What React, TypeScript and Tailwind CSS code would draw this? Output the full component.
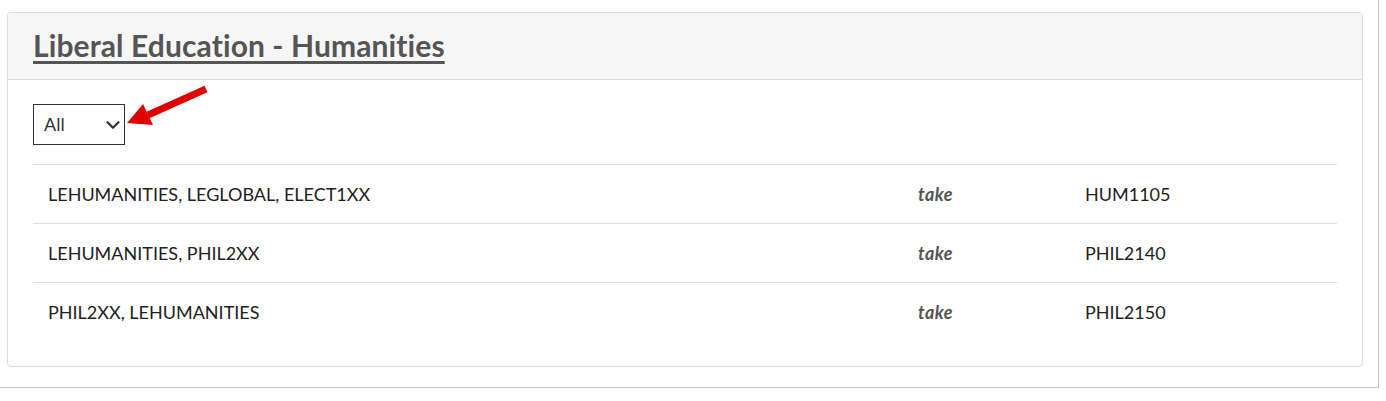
import { ChevronDown } from 'lucide-react';

const ROWS = [
  { req: 'LEHUMANITIES, LEGLOBAL, ELECT1XX', course: 'HUM1105' },
  { req: 'LEHUMANITIES, PHIL2XX', course: 'PHIL2140' },
  { req: 'PHIL2XX, LEHUMANITIES', course: 'PHIL2150' },
];

export default function App() {
  return (
    <div className="h-[401px] bg-white font-['Lato',sans-serif]">
      <div className="w-[1379px] h-[388px] border-r border-b border-[#c4c4c4] pt-[12px] pl-[7px]">
        <div className="w-[1356px] h-[355px] border border-[#dcdcdc] rounded-[4px] overflow-hidden">
          {/* Header */}
          <div className="h-[67px] bg-[#f6f6f6] border-b border-[#dcdcdc] px-[25px] pt-[14px]">
            <h2 className="text-[30px] leading-[36px] font-bold text-[#555] underline underline-offset-[4px] decoration-[3px] tracking-[0.1px]">
              Liberal Education - Humanities
            </h2>
          </div>

          {/* Body */}
          <div className="px-[25px] pt-[24px] relative">
            <div className="relative w-[92px] h-[41px] border border-[#333] flex items-center pl-[10px] text-[18px] text-[#333]">
              All
              <ChevronDown className="absolute left-[68px] top-[9px] w-[22px] h-[22px] text-[#333]" strokeWidth={2.4} />
            </div>

            {/* annotation arrow */}
            <svg className="absolute left-[112px] top-0" width="95" height="55" viewBox="0 0 95 55">
              <line x1="86" y1="9" x2="28" y2="35" stroke="#e00000" strokeWidth="7" />
              <polygon points="7,43 23,24 33,45" fill="#e00000" />
            </svg>

            <div className="mt-[19px]">
              {ROWS.map((r) => (
                <div key={r.course} className="grid grid-cols-[870px_167px_1fr] h-[59px] items-center border-t border-[#dedede] text-[18px] text-[#222]">
                  <div className="pl-[15px]">{r.req}</div>
                  <div className="pl-[15px] font-bold italic text-[#555] tracking-[0.5px]">take</div>
                  <div className="pl-[15px]">{r.course}</div>
                </div>
              ))}
            </div>
          </div>
        </div>
      </div>
    </div>
  );
}
